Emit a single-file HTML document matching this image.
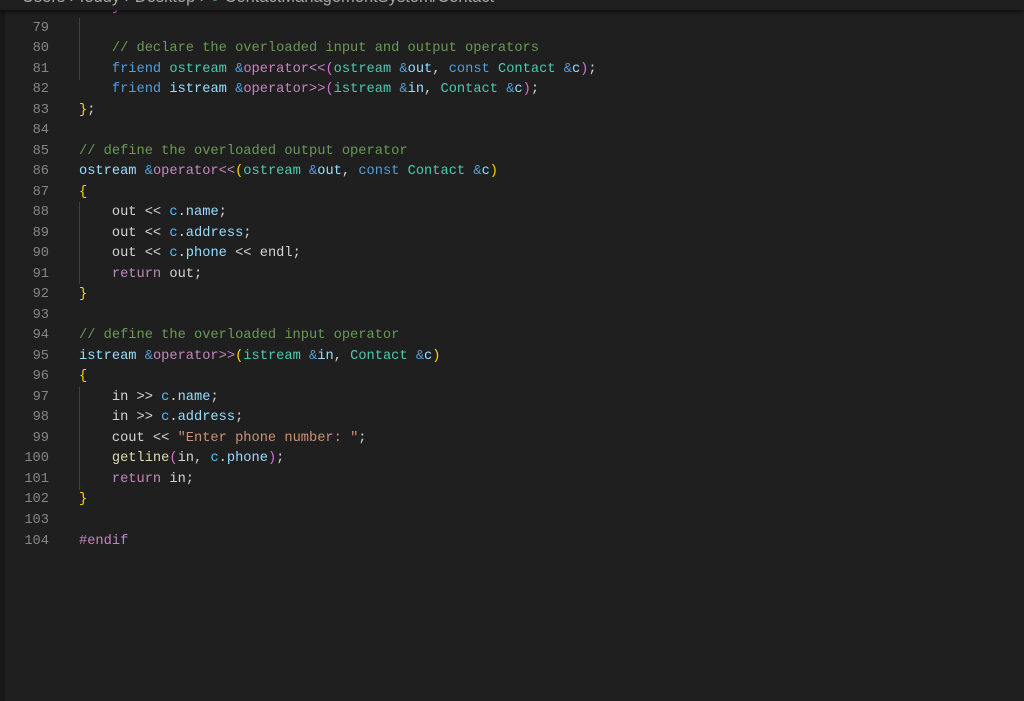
<!DOCTYPE html>
<html><head><meta charset="utf-8"><style>
html,body{margin:0;padding:0;}
body{width:1024px;height:701px;background:#1f1f1f;position:relative;overflow:hidden;font-family:"Liberation Mono",monospace;font-size:13.7px;}
.strip{position:absolute;left:0;top:0;width:5px;height:701px;background:#181818;}
.top{position:absolute;left:0;top:0;width:1024px;height:10px;background:#1f1f1f;box-shadow:0 2px 4px rgba(0,0,0,.55);overflow:hidden;z-index:3;}
.top span{position:absolute;left:22px;top:-12px;font-family:"Liberation Sans",sans-serif;font-size:16.5px;color:#a8a8a8;white-space:pre;}
.ln{position:absolute;left:0;width:49px;text-align:right;color:#858585;height:20.52px;line-height:20.52px;}
.cd{position:absolute;left:79px;white-space:pre;color:#d4d4d4;height:20.52px;line-height:20.52px;}
.g{position:absolute;width:1px;background:#404040;}
.c{color:#6a9955}.k{color:#569cd6}.t{color:#4ec9b0}.p{color:#c586c0}.v{color:#9cdcfe}.y{color:#ffd700}.m{color:#da70d6}.f{color:#dcdcaa}.s{color:#ce9178}.b{color:#4fc1ff}
</style></head><body>
<div class="strip"></div>
<div class="top"><span>Users › feddy › Desktop › <span style="position:static;color:#519aba">●</span> ContactManagementSystem/Contact</span></div>
<div class="g" style="left:79px;top:18px;height:62px"></div>
<div class="g" style="left:79px;top:202px;height:82px"></div>
<div class="g" style="left:79px;top:387px;height:103px"></div>
<div id="c"></div>
<script>
var L=[
[78,'    <span class="m">}</span>'],
[79,''],
[80,'    <span class="c">// declare the overloaded input and output operators</span>'],
[81,'    <span class="k">friend</span> <span class="t">ostream</span> <span class="k">&amp;</span><span class="p">operator&lt;&lt;</span><span class="m">(</span><span class="t">ostream</span> <span class="k">&amp;</span><span class="v">out</span>, <span class="k">const</span> <span class="t">Contact</span> <span class="k">&amp;</span><span class="v">c</span><span class="m">)</span>;'],
[82,'    <span class="k">friend</span> <span class="v">istream</span> <span class="k">&amp;</span><span class="p">operator&gt;&gt;</span><span class="m">(</span><span class="t">istream</span> <span class="k">&amp;</span><span class="v">in</span>, <span class="t">Contact</span> <span class="k">&amp;</span><span class="v">c</span><span class="m">)</span>;'],
[83,'<span class="y">}</span>;'],
[84,''],
[85,'<span class="c">// define the overloaded output operator</span>'],
[86,'<span class="v">ostream</span> <span class="k">&amp;</span><span class="p">operator&lt;&lt;</span><span class="y">(</span><span class="t">ostream</span> <span class="k">&amp;</span><span class="v">out</span>, <span class="k">const</span> <span class="t">Contact</span> <span class="k">&amp;</span><span class="v">c</span><span class="y">)</span>'],
[87,'<span class="y">{</span>'],
[88,'    out &lt;&lt; <span class="b">c</span>.<span class="v">name</span>;'],
[89,'    out &lt;&lt; <span class="b">c</span>.<span class="v">address</span>;'],
[90,'    out &lt;&lt; <span class="b">c</span>.<span class="v">phone</span> &lt;&lt; endl;'],
[91,'    <span class="p">return</span> out;'],
[92,'<span class="y">}</span>'],
[93,''],
[94,'<span class="c">// define the overloaded input operator</span>'],
[95,'<span class="v">istream</span> <span class="k">&amp;</span><span class="p">operator&gt;&gt;</span><span class="y">(</span><span class="t">istream</span> <span class="k">&amp;</span><span class="v">in</span>, <span class="t">Contact</span> <span class="k">&amp;</span><span class="v">c</span><span class="y">)</span>'],
[96,'<span class="y">{</span>'],
[97,'    in &gt;&gt; <span class="b">c</span>.<span class="v">name</span>;'],
[98,'    in &gt;&gt; <span class="b">c</span>.<span class="v">address</span>;'],
[99,'    cout &lt;&lt; <span class="s">"Enter phone number: "</span>;'],
[100,'    <span class="f">getline</span><span class="m">(</span>in, <span class="b">c</span>.<span class="v">phone</span><span class="m">)</span>;'],
[101,'    <span class="p">return</span> in;'],
[102,'<span class="y">}</span>'],
[103,''],
[104,'<span class="p">#endif</span>']
];
var h='';
L.forEach(function(l){var top=(18.5+(l[0]-79)*20.52).toFixed(2);
h+='<div class="ln" style="top:'+top+'px">'+l[0]+'</div><div class="cd" style="top:'+top+'px">'+l[1]+'</div>';});
document.getElementById('c').innerHTML=h;
</script>
</body></html>
